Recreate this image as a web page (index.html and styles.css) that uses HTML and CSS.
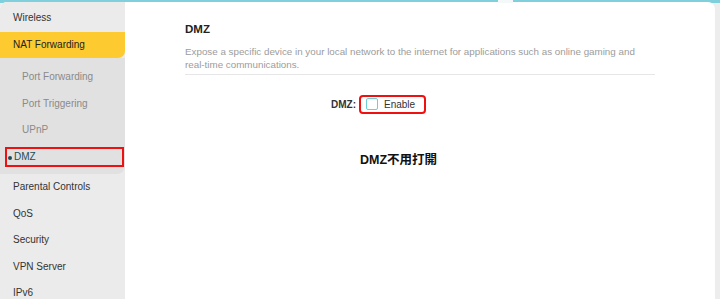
FILE: index.html
```html
<!DOCTYPE html>
<html>
<head>
<meta charset="utf-8">
<link rel="stylesheet" href="styles.css">
</head>
<body>
<span class="notch"></span>
<div class="page">
  <nav class="sidebar">
    <div class="item">Wireless</div>
    <div class="item active">NAT Forwarding</div>
    <div class="submenu">
      <div class="sub">Port Forwarding</div>
      <div class="sub">Port Triggering</div>
      <div class="sub">UPnP</div>
      <div class="sub current"><span class="dot"></span>DMZ<span class="mark"></span></div>
    </div>
    <div class="item">Parental Controls</div>
    <div class="item">QoS</div>
    <div class="item">Security</div>
    <div class="item">VPN Server</div>
    <div class="item">IPv6</div>
  </nav>
  <main class="content">
    <h1 class="title">DMZ</h1>
    <p class="desc">Expose a specific device in your local network to the internet for applications such as online gaming and real-time communications.</p>
    <div class="row">
      <span class="label">DMZ:</span>
      <label class="check"><span class="box"></span>Enable<span class="mark2"></span></label>
    </div>
    <div class="note">DMZ不用打開</div>
  </main>
</div>
</body>
</html>
```
FILE: styles.css
```css
html, body {
  margin: 0;
  padding: 0;
}
body {
  width: 720px;
  height: 299px;
  overflow: hidden;
  background: linear-gradient(#7fd0dc 0, #7fd0dc 3px, #ededed 3px);
  font-family: "Liberation Sans", Arial, sans-serif;
  position: relative;
}
.notch {
  position: absolute;
  left: 498px;
  top: 0;
  width: 15px;
  height: 3px;
  background: #f4f8f8;
}
.page {
  margin: 2px 5px 0 0;
  height: 297px;
  background: #fff;
  border-radius: 7px 7px 0 0;
  overflow: hidden;
  display: flex;
}
.sidebar {
  width: 125px;
  flex: none;
  background: #ebebeb;
  padding-top: 3px;
  font-size: 10px;
  color: #333;
}
.item {
  height: 26.5px;
  line-height: 26.5px;
  padding-left: 13px;
}
.item.active {
  background: #fdca2f;
  border-bottom-right-radius: 7px;
  color: #222;
}
.submenu {
  background: #e1e1e1;
  border-bottom-right-radius: 8px;
  padding: 6px 0 4px;
}
.sub {
  height: 26.5px;
  line-height: 26.5px;
  padding-left: 22px;
  color: #8a8a8a;
  position: relative;
}
.sub.current {
  color: #1f4d55;
  padding-left: 14px;
}
.dot {
  position: absolute;
  left: 8px;
  top: 12px;
  width: 4px;
  height: 4px;
  border-radius: 50%;
  background: #1f4d55;
}
.mark {
  position: absolute;
  left: 5px;
  top: 3px;
  width: 115px;
  height: 16px;
  border: 2px solid #ee1111;
}
.content {
  flex: 1;
  padding: 0 0 0 60px;
}
.title {
  margin: 19px 0 0;
  font-size: 11.5px;
  font-weight: bold;
  color: #222;
  line-height: 16px;
}
.desc {
  margin: 8px 0 0;
  width: 470px;
  font-size: 9.8px;
  line-height: 13px;
  color: #9c9c9c;
  padding-bottom: 3px;
  border-bottom: 1px solid #e6e6e6;
}
.row {
  display: flex;
  align-items: center;
  margin-top: 19px;
  height: 20px;
  font-size: 10px;
}
.label {
  width: 171px;
  text-align: right;
  font-weight: bold;
  color: #333;
}
.check {
  position: relative;
  display: flex;
  align-items: center;
  margin-left: 10px;
  color: #333;
}
.box {
  width: 10px;
  height: 10px;
  border: 1px solid #6ccfd8;
  border-radius: 2px;
  margin-right: 6px;
}
.mark2 {
  position: absolute;
  left: -7px;
  top: -3px;
  width: 63px;
  height: 15px;
  border: 2px solid #ee1111;
  border-radius: 4px;
}
.note {
  margin: 35px 0 0 175px;
  font-size: 12.5px;
  font-weight: bold;
  color: #111;
  font-family: "Liberation Sans", "Noto Sans CJK TC", sans-serif;
}
```
